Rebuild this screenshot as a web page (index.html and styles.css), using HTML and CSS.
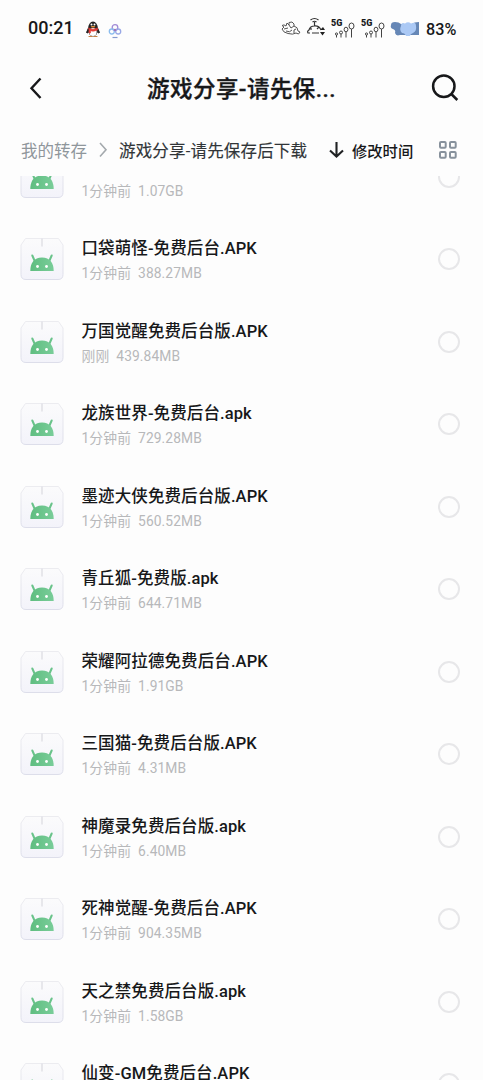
FILE: index.html
```html
<!DOCTYPE html>
<html lang="zh-CN">
<head>
<meta charset="utf-8">
<title>游戏分享</title>
<link rel="stylesheet" href="styles.css">
</head>
<body>
<svg class="defs" width="0" height="0">
  <defs>
    <linearGradient id="box" x1="0" y1="0" x2="0" y2="1"><stop offset="0" stop-color="#fbfbfc"/><stop offset="1" stop-color="#f3f3fa"/></linearGradient>
    <linearGradient id="edge" x1="0" y1="0" x2="0" y2="1"><stop offset="0" stop-color="#ececf0"/><stop offset="1" stop-color="#dddeea"/></linearGradient>
    <linearGradient id="green" x1="0" y1="0" x2="1" y2="0"><stop offset="0" stop-color="#5fbd80"/><stop offset="1" stop-color="#79cd99"/></linearGradient>
    <symbol id="apk" viewBox="0 0 44 44">
      <path d="M5.500 1.500H38.500L43 8V37.500Q43 42.500 38 42.500H6Q1 42.500 1 37.500V8Z" fill="url(#box)" stroke="url(#edge)" stroke-linejoin="round"/>
      <path d="M22 1.500V9.500" stroke="#e0e0e6" stroke-width="1.500"/>
      <path d="M12.300 18.500L14.500 23.500M31.700 18.500L29.500 23.500" stroke="#69c38a" stroke-width="2" stroke-linecap="round"/>
      <path d="M10.300 34C10.300 26 14 20.500 22 20.500S33.700 26 33.700 34Z" fill="url(#green)"/>
      <circle cx="17.500" cy="29.500" r="1.400" fill="#fff"/><circle cx="26.500" cy="29.500" r="1.400" fill="#fff"/>
    </symbol>
    <symbol id="signal" viewBox="0 0 26 20">
      <g fill="none" stroke="#444" stroke-width="1">
        <circle cx="5.500" cy="15" r="1.100"/><path d="M5.500 16V18.500"/>
        <circle cx="10" cy="13.500" r="1.500"/><path d="M10 15V18.500"/>
        <ellipse cx="15" cy="10.500" rx="1.900" ry="2.300"/><path d="M15 13V18.500"/>
        <ellipse cx="20.500" cy="7" rx="2.500" ry="3"/><path d="M20.500 10V18.500"/>
      </g>
    </symbol>
  </defs>
</svg>
<div class="status">
  <span class="clock">00:21</span>
  <svg class="qq" width="16" height="18" viewBox="0 0 16 18">
    <path d="M3.500 8L1.500 12.500L3 13ZM12.500 8L14.500 12.500L13 13Z" fill="#222" stroke="#222"/>
    <ellipse cx="8" cy="9" rx="5" ry="7.500" fill="#222"/>
    <ellipse cx="8" cy="12" rx="3.700" ry="4" fill="#fff"/>
    <path d="M3.500 8Q8 10.500 12.500 8V10Q8 12 5.500 10.800V13H4V10Z" fill="#e23b35" stroke="#e23b35" stroke-width=".6"/>
    <circle cx="6.500" cy="4.500" r="1" fill="#fff"/><circle cx="9.500" cy="4.500" r="1" fill="#fff"/>
    <ellipse cx="8" cy="6.700" rx="2.300" ry=".8" fill="#ef9a3c"/>
    <path d="M4 16.500H7M9 16.500H12" stroke="#c9803f" stroke-width="1.200" stroke-linecap="round"/>
  </svg>
  <svg class="cloud" width="14" height="16" viewBox="0 0 14 16">
    <g fill="none" stroke-width="1.300"><circle cx="7" cy="4.500" r="2.800" stroke="#a18ad6"/><circle cx="3.800" cy="8.500" r="2.500" stroke="#8bbcee"/><circle cx="10.200" cy="8.500" r="2.500" stroke="#98a8e6"/></g>
    <circle cx="7" cy="7" r="1.200" fill="#a073bd"/>
    <path d="M4.500 14.500H9.500" stroke="#8499cf" stroke-width="1.200"/>
  </svg>
  <svg class="sea" width="20" height="16" viewBox="0 0 20 16">
    <path d="M3 7L1 5.500Q3 4 5 6L6 3L8 5V2.500L11 2L13 4V6Q17 7 17 11L19 12L17.500 14L15 13Q12 15 7 13.500Q2 12.500 1 9ZM3 9L7 8M5 11Q9 13 11 10M8 5L10 8L13 6M13 13V10L15 9" fill="none" stroke="#555" stroke-width="1"/>
  </svg>
  <svg class="wifi" width="18" height="20" viewBox="0 0 18 20">
    <g fill="none" stroke="#333" stroke-width="1.200"><path d="M3.500 3Q7.500 0 11.500 3M5.500 5Q7.500 3.500 9.500 5M7.500 5V9M3 16H1Q0 14 2 13Q3 9 7.500 9Q12 8.500 14 13M5 16H12M10 12L12 10M4 11V13"/></g>
    <path d="M14 12L16 10L18 13H14ZM13 15H18L15.500 18.500Z" fill="#222"/>
  </svg>
  <span class="sig"><b>5G</b><svg width="26" height="20"><use href="#signal"/></svg></span>
  <span class="sig"><b>5G</b><svg width="26" height="20"><use href="#signal"/></svg></span>
  <svg class="battery" width="30" height="16" viewBox="0 0 30 16">
    <path d="M1 4Q1 1 5 1Q9 1 11 3H22Q24 1 29 1V14H20L10 14Q6 15.500 5 12Q6 9 3 8Q0 7 1 4Z" fill="#6687b6"/>
    <path d="M11 5Q11 1 15 2.500Q18 0 21 2.500Q26 0 26 5Q27 10 23 12Q20 13 20 15H16Q15 12 12 12Q9 9 11 5Z" fill="#abc9f5"/>
  </svg>
  <span class="percent">83%</span>
</div>
<header class="bar">
  <svg width="24" height="28" viewBox="0 0 24 28"><path d="M16.500 4.500L7.500 14.200L16.500 24" fill="none" stroke="#17181a" stroke-width="2.400"/></svg>
  <h1>游戏分享-请先保...</h1>
  <svg width="28" height="28" viewBox="0 0 28 28"><g fill="none" stroke="#17181a" stroke-width="2.500"><circle cx="12.800" cy="12.300" r="10.700"/><path d="M20.300 20L26.300 26"/></g></svg>
</header>
<nav class="path">
  <span class="parent">我的转存</span>
  <svg class="chev" width="10" height="16" viewBox="0 0 10 16"><path d="M1 1L7 7.700L1 14.500" fill="none" stroke="#a4a9ad" stroke-width="1.600"/></svg>
  <span class="current">游戏分享-请先保存后下载</span>
  <svg class="down" width="16" height="18" viewBox="0 0 16 18"><path d="M7.500 1V15.500M1 9.500L7.500 15.500L14 9.500" fill="none" stroke="#202224" stroke-width="2.100"/></svg>
  <span class="sort">修改时间</span>
  <svg class="grid" width="18" height="18" viewBox="0 0 18 18"><g fill="none" stroke="#87919c" stroke-width="2"><rect x="1" y="1" width="5.700" height="5.700" rx="1"/><rect x="11" y="1" width="5.700" height="5.700" rx="1"/><rect x="1" y="11" width="5.700" height="5.700" rx="1"/><rect x="11" y="11" width="5.700" height="5.700" rx="1"/></g></svg>
</nav>
<main class="viewport"><ul class="list" id="files"></ul></main>
<script src="files.js"></script>
</body>
</html>
```
FILE: files.js
```js
const files = [
  ["", "1分钟前", "1.07GB"],
  ["口袋萌怪-免费后台.APK", "1分钟前", "388.27MB"],
  ["万国觉醒免费后台版.APK", "刚刚", "439.84MB"],
  ["龙族世界-免费后台.apk", "1分钟前", "729.28MB"],
  ["墨迹大侠免费后台版.APK", "1分钟前", "560.52MB"],
  ["青丘狐-免费版.apk", "1分钟前", "644.71MB"],
  ["荣耀阿拉德免费后台.APK", "1分钟前", "1.91GB"],
  ["三国猫-免费后台版.APK", "1分钟前", "4.31MB"],
  ["神魔录免费后台版.apk", "1分钟前", "6.40MB"],
  ["死神觉醒-免费后台.APK", "1分钟前", "904.35MB"],
  ["天之禁免费后台版.apk", "1分钟前", "1.58GB"],
  ["仙变-GM免费后台.APK", "", ""]
];
document.getElementById("files").innerHTML = files.map(([name, time, size]) => `
  <li class="file">
    <svg class="thumb" width="44" height="44"><use href="#apk"/></svg>
    <div class="info"><div class="name">${name}</div><div class="meta"><span>${time}</span><span>${size}</span></div></div>
    <span class="check"></span>
  </li>`).join("");
```
FILE: styles.css
```css
* { box-sizing: border-box; }
body {
  margin: 0;
  height: 1080px;
  overflow: hidden;
  display: flex;
  flex-direction: column;
  background: #fdfdfd;
  color: #17181a;
  font-family: Roboto, "Noto Sans CJK SC", sans-serif;
  white-space: nowrap;
}
svg { display: block; flex: none; }
.defs { position: absolute; }
.status { height: 58px; display: flex; align-items: center; padding: 0 0 0 28px; }
.clock { width: 57px; font-size: 18px; line-height: 24px; margin-top: -2px; font-weight: 500; }
.cloud { margin-left: 7px; margin-top: 3px; }
.sea { margin-left: 159px; margin-top: -2px; }
.wifi { margin-left: 6px; margin-top: -4px; }
.sig { display: grid; width: 30px; padding-left: 6px; height: 20px; }
.sig b { grid-area: 1 / 1; font-size: 9px; line-height: 9px; font-weight: 900; }
.sig svg { grid-area: 1 / 1; }
.battery { margin-left: 5px; }
.percent { margin-left: 6px; font-size: 16.200px; font-weight: 500; }
.bar { height: 60px; display: flex; align-items: center; justify-content: space-between; padding: 0 24px 0 24px; }
.bar h1 { margin: 2px 0 0 4px; font-size: 22.500px; line-height: 32px; font-weight: 500; letter-spacing: .45px; -webkit-text-stroke: .35px #17181a; }
.path { height: 58px; display: flex; align-items: center; padding: 6px 0 0 21px; font-size: 16.500px; }
.parent { width: 78px; color: #8f969b; }
.current { width: 200px; margin-left: 10px; color: #303437; letter-spacing: .18px; -webkit-text-stroke: .15px #303437; }
.down { margin-left: 10px; }
.sort { width: 72px; margin-left: 7px; font-size: 15.300px; font-weight: 500; }
.grid { margin-left: 15px; margin-top: -1px; }
.chev { margin-top: -1px; }
.viewport { flex: 1; overflow: hidden; }
.list { list-style: none; margin: -40.500px 0 0; padding: 0; }
.file { height: 82.500px; display: flex; align-items: center; padding: 0 23px 0 20px; }
.thumb { margin-right: 17.500px; }
.info { flex: 1; padding-top: 3px; }
.name { height: 25px; font-size: 16.500px; line-height: 26px; font-weight: 500; letter-spacing: .1px; }
.meta { height: 24px; display: flex; gap: 7px; color: #b7b8ba; font-size: 13.800px; line-height: 24px; letter-spacing: .1px; }
.check { width: 22px; height: 22px; border: 2.500px solid #e7e7e9; border-radius: 50%; }
```
